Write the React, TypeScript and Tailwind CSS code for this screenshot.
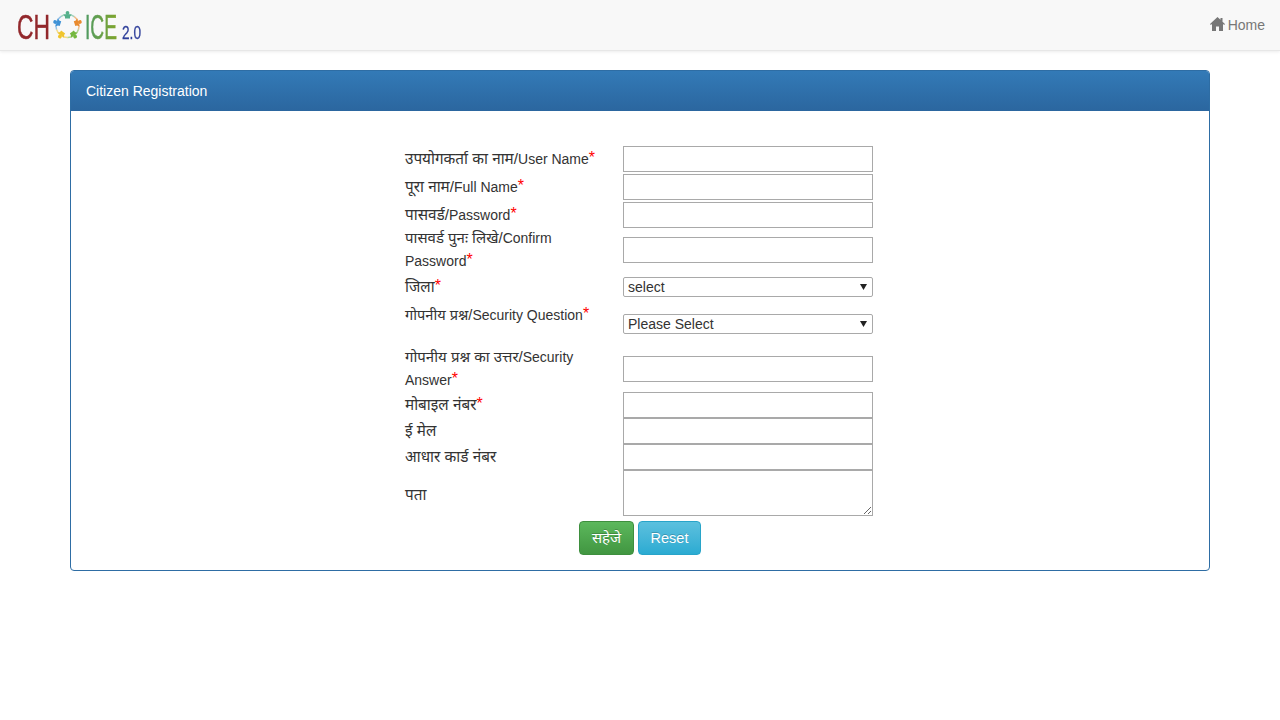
const inputCls = "w-[250px] h-[26px] border border-[#a9a9a9] bg-white block";

function Star() {
  return <span className="text-[#ff0000] text-[16px] leading-none relative -top-[1px]">*</span>;
}

function Row({ hi, en, required, h, children, top, hiCls = "text-[15.3px]", labelCls = "" }: { hi: string; en?: string; required?: boolean; h: string; children: React.ReactNode; top?: boolean; hiCls?: string; labelCls?: string }) {
  return (
    <div className={`flex ${h} ${top ? "items-start" : "items-center"}`}>
      <div className={`w-[218px] pr-[20px] leading-[23px] text-[#333] ${labelCls}`}>
        <span className={hiCls}>{hi}</span>
        {en}
        {required && <Star />}
      </div>
      {children}
    </div>
  );
}

function Picker({ value, className }: { value: string; className?: string }) {
  return (
    <div className={`relative w-[250px] h-5 ${className ?? ""}`}>
      <select className="appearance-none w-full h-full border border-[#a9a9a9] rounded-[2px] bg-white text-[14px] leading-[16px] text-[#333] pl-1 pb-[1px] block">
        <option>{value}</option>
      </select>
      <svg width="7" height="6" viewBox="0 0 7 6" fill="#222" className="absolute right-[6px] top-[7px] pointer-events-none">
        <path d="M0 0 L7 0 L3.5 6 Z" />
      </svg>
    </div>
  );
}

function Figure({ angle, color }: { angle: number; color: string }) {
  return (
    <g transform={`rotate(${angle} 67.5 26)`}>
      <path d="M60.74 16.7 A11.5 11.5 0 0 1 74.26 16.7" fill="none" stroke={color} strokeOpacity="0.55" strokeWidth="1.5" />
      <g fill={color}>
        <circle cx="67.5" cy="13" r="1.9" />
        <path d="M63.4 14.6 L71.6 14.6 L70 16.8 L70 18.6 L65 18.6 L65 16.8 Z" />
      </g>
    </g>
  );
}

function Logo() {
  return (
    <svg width="150" height="50" viewBox="0 0 150 50" className="blur-[0.3px]">
      <defs>
        <linearGradient id="ice" x1="0" x2="1" y1="0" y2="0">
          <stop offset="0" stopColor="#4f9a63" />
          <stop offset="1" stopColor="#7fa52c" />
        </linearGradient>
      </defs>
      <text x="17" y="39" fontSize="35" fontFamily="Liberation Sans, sans-serif" fill="#92282c" stroke="#92282c" strokeWidth="0.5" textLength="33" lengthAdjust="spacingAndGlyphs">CH</text>
      <Figure angle={0} color="#55b08a" />
      <Figure angle={72} color="#e98a2e" />
      <Figure angle={144} color="#74b83f" />
      <Figure angle={216} color="#f0c52c" />
      <Figure angle={288} color="#3f92d6" />
      <text x="85" y="39" fontSize="35" fontFamily="Liberation Sans, sans-serif" fill="url(#ice)" stroke="url(#ice)" strokeWidth="0.5" textLength="32" lengthAdjust="spacingAndGlyphs">ICE</text>
      <text x="122" y="39" fontSize="19" fontFamily="Liberation Sans, sans-serif" fill="#2f3f9a" stroke="#2f3f9a" strokeWidth="0.3" textLength="19" lengthAdjust="spacingAndGlyphs">2.0</text>
    </svg>
  );
}

export default function App() {
  return (
    <div className="min-h-screen bg-white text-[14px] text-[#333]" style={{ fontFamily: '"Liberation Sans", "Noto Sans", "Noto Sans Devanagari", sans-serif' }}>
      <nav className="h-[51px] bg-[#f8f8f8] border-b border-[#e7e7e7] shadow-[0_1px_3px_rgba(0,0,0,0.08)] flex items-center justify-between pr-[15px]">
        <Logo />
        <a className="flex items-center gap-[3px] text-[#777] text-[14px]">
          <svg width="15" height="14" viewBox="0 0 15 14" fill="#777" className="-mt-[2px]">
            <path d="M7.5 0 L0 7 L0.8 8 L2 7 L2 14 L6 14 L6 9.5 L9 9.5 L9 14 L13 14 L13 7 L14.2 8 L15 7 L12.5 4.7 L12.5 1 L10.5 1 L10.5 2.8 Z" />
          </svg>
          Home
        </a>
      </nav>

      <div className="mx-[70px] mt-[19px] border border-[#2e6da4] rounded-[4px] overflow-hidden">
        <div className="h-10 bg-gradient-to-b from-[#337ab7] to-[#2b669f] text-white flex items-center px-[15px]">Citizen Registration</div>
        <div className="pt-[35px] pb-[15px]">
          <div className="flex flex-col pl-[334px]">
            <Row hi="उपयोगकर्ता का नाम/" en="User Name" required h="h-[26px] mb-[2px]"><input className={inputCls} /></Row>
            <Row hi="पूरा नाम/" en="Full Name" required h="h-[26px] mb-[2px]"><input className={inputCls} /></Row>
            <Row hi="पासवर्ड/" en="Password" required h="h-[26px]"><input className={inputCls} /></Row>
            <Row hi="पासवर्ड पुनः लिखे/" en="Confirm Password" required h="h-[44px]" hiCls="text-[15px]" labelCls="-mt-[1px]"><input className={inputCls} /></Row>
            <Row hi="जिला" required h="h-[30px]">
              <Picker value="select" />
            </Row>
            <Row hi="गोपनीय प्रश्न/" en="Security Question" required h="h-[44px]" top hiCls="text-[14.6px]" labelCls="pt-[2px]">
              <Picker value="Please Select" className="mt-3" />
            </Row>
            <Row hi="गोपनीय प्रश्न का उत्तर/" en="Security Answer" required h="h-[46px]" hiCls="text-[15px]" labelCls="-mt-[1px]"><input className={inputCls} /></Row>
            <Row hi="मोबाइल नंबर" required h="h-[26px]"><input className={inputCls} /></Row>
            <Row hi="ई मेल" h="h-[26px]"><input className={inputCls} /></Row>
            <Row hi="आधार कार्ड नंबर" h="h-[26px]"><input className={inputCls} /></Row>
            <Row hi="पता" h="h-[46px]" labelCls="pt-[3px]"><textarea className="w-[250px] h-[46px] border border-[#a9a9a9] bg-white block resize" /></Row>
          </div>
          <div className="flex justify-center gap-1 mt-[5px]">
            <button className="h-[34px] w-[55px] rounded-[4px] border border-[#3e8f3e] bg-gradient-to-b from-[#5cb85c] to-[#419641] text-white text-[15px] [text-shadow:0_-1px_0_rgba(0,0,0,0.2)]">सहेजे</button>
            <button className="h-[34px] w-[63px] pt-[1px] rounded-[4px] border border-[#28a4c9] bg-gradient-to-b from-[#5bc0de] to-[#2aabd2] text-white text-[14.5px] [text-shadow:0_-1px_0_rgba(0,0,0,0.2)]">Reset</button>
          </div>
        </div>
      </div>
    </div>
  );
}
